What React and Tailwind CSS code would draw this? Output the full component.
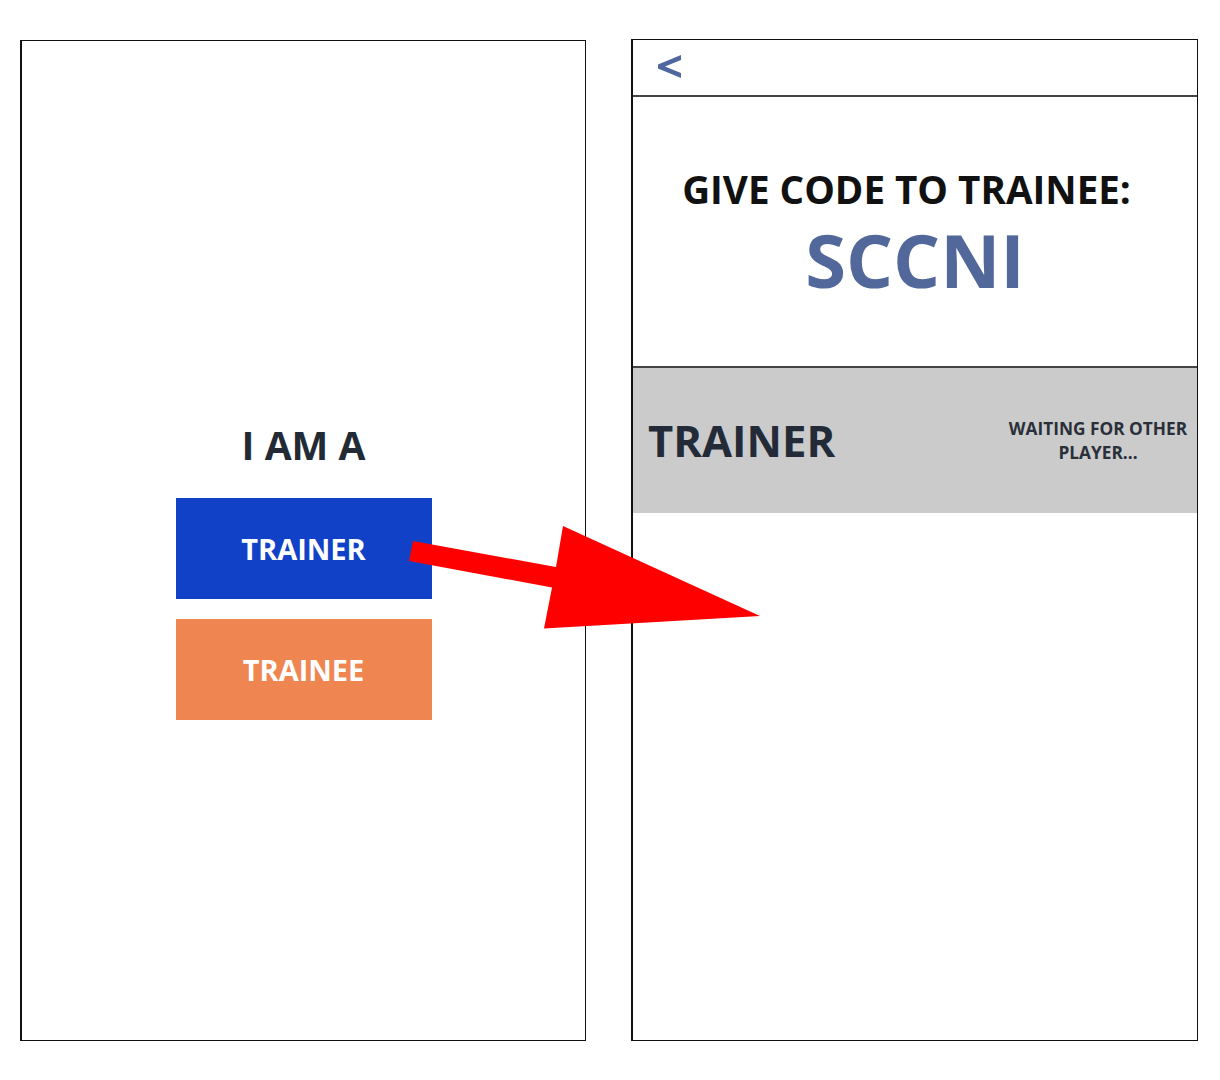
import React from "react";

export default function App() {
  return (
    <div
      className="relative w-[1220px] h-[1080px] bg-white overflow-hidden"
      style={{ fontFamily: '"Open Sans", "Noto Sans", sans-serif' }}
    >
      <div className="flex items-start pl-[20px] gap-[45px]">
        {/* Left screen */}
        <div className="mt-[40px] w-[566px] h-[1001px] border border-l-2 border-[#111] flex flex-col items-center pt-[380px]">
          <div className="text-[39px] leading-[48px] font-bold text-[#222a35]">I AM A</div>
          <div className="mt-[29px] w-[256px] h-[101px] bg-[#1141c6] flex items-center justify-center text-white text-[29px] font-bold">
            TRAINER
          </div>
          <div className="mt-[20px] w-[256px] h-[101px] bg-[#ef8550] flex items-center justify-center text-white text-[29px] font-bold">
            TRAINEE
          </div>
        </div>

        {/* Right screen */}
        <div className="mt-[39px] w-[567px] h-[1002px] border border-l-2 border-[#111] flex flex-col">
          <div className="h-[57px] border-b-2 border-[#444] flex items-start pl-[25px] pt-[15px]">
            <svg width="24" height="24" viewBox="0 0 24 24">
              <polygon
                points="23,0 23,5 7,11.5 23,18 23,23 0,13.5 0,9.5"
                fill="#51679f"
              />
            </svg>
          </div>
          <div className="h-[269px] flex flex-col items-center pt-[68px]">
            <div className="pr-[17px] text-[38.6px] leading-[48px] font-bold text-[#111]">GIVE CODE TO TRAINEE:</div>
            <div className="mt-[7px] text-[74px] leading-[80px] font-bold text-[#52679a]">SCCNI</div>
          </div>
          <div className="h-[147px] border-t-2 border-[#444] bg-[#cbcbcb] flex items-center justify-between pl-[15px] pr-[4px]">
            <div className="text-[43.6px] font-bold text-[#232b38]">TRAINER</div>
            <div className="w-[190px] text-center text-[17.3px] leading-[24px] font-bold text-[#2a2f3a]">
              WAITING FOR OTHER PLAYER...
            </div>
          </div>
        </div>
      </div>

      {/* Red arrow overlay */}
      <svg
        className="absolute left-0 top-0 pointer-events-none"
        width="1220"
        height="1080"
        viewBox="0 0 1220 1080"
      >
        <polygon
          points="413,541 556,567 563,526 760,616 544,628.5 552,587.5 409,561"
          fill="#ff0000"
        />
      </svg>
    </div>
  );
}
